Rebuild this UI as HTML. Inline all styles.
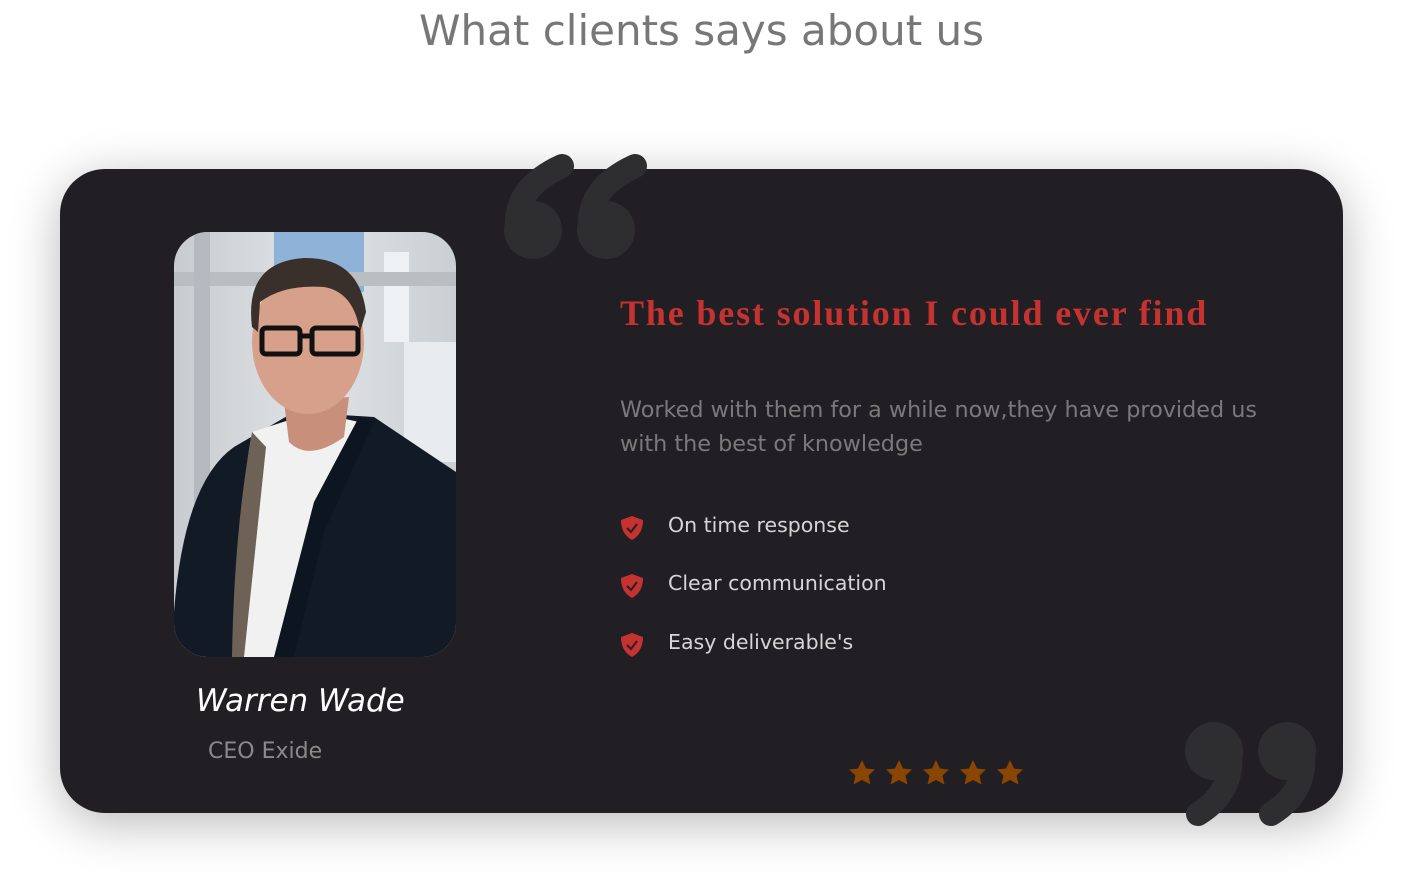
<!DOCTYPE html>
<html><head><meta charset="utf-8"><style>
html,body{margin:0;padding:0;background:#fff;width:1403px;height:877px;overflow:hidden;font-family:"Liberation Sans","DejaVu Sans",sans-serif}
h1{position:absolute;top:6px;left:0;width:1403px;text-align:center;margin:0;font-weight:400;font-size:42px;color:#777;font-family:"DejaVu Sans","Liberation Sans",sans-serif}
.card{position:absolute;left:60px;top:169px;width:1283px;height:644px;background:#211f23;border-radius:45px;box-shadow:0 10px 50px rgba(0,0,0,.28)}
.photo{position:absolute;left:174px;top:232px;width:282px;height:425px;border-radius:34px;overflow:hidden}
.name{position:absolute;left:196px;top:683px;font-size:31px;font-style:italic;color:#fff;font-family:"DejaVu Sans","Liberation Sans",sans-serif}
.role{position:absolute;left:208px;top:739px;font-size:22px;color:#8a8a8a;font-family:"DejaVu Sans",sans-serif}
.head{position:absolute;left:620px;top:292px;font-family:"Liberation Serif",serif;font-weight:bold;font-size:36px;color:#c43330;letter-spacing:1.85px;white-space:nowrap}
.body{position:absolute;left:620px;top:393px;font-size:22.3px;line-height:34px;color:#7a7a7a;width:680px;font-family:"DejaVu Sans",sans-serif}
.li{position:absolute;left:620px;font-size:20.5px;color:#d6d6d6;font-family:"DejaVu Sans",sans-serif}
.li svg{position:absolute;left:0;top:2px}
.li span{position:absolute;left:48px;top:0;white-space:nowrap}
</style></head><body>
<h1>What clients says about us</h1>
<div class="card"></div>
<svg style="position:absolute;left:0;top:0" width="1403" height="877">
<g fill="#2e2e31" stroke="#2e2e31">
<circle cx="533" cy="230" r="29" stroke="none"/>
<path d="M517 228 Q514 188 562 166" fill="none" stroke-width="24" stroke-linecap="round"/>
<circle cx="606" cy="230" r="29" stroke="none"/>
<path d="M590 228 Q587 188 635 166" fill="none" stroke-width="24" stroke-linecap="round"/>
<circle cx="1214" cy="751" r="29" stroke="none"/>
<path d="M1230 752 Q1234 792 1198 814" fill="none" stroke-width="24" stroke-linecap="round"/>
<circle cx="1287" cy="751" r="29" stroke="none"/>
<path d="M1303 752 Q1307 792 1271 814" fill="none" stroke-width="24" stroke-linecap="round"/>
</g>
<g fill="#8a4600">
<path id="st" d="M862 760 L866 768.5 L875 769.5 L868.5 775.5 L870.5 784.5 L862 780 L853.5 784.5 L855.5 775.5 L849 769.5 L858 768.5Z"/>
<use href="#st" x="37"/><use href="#st" x="74"/><use href="#st" x="111"/><use href="#st" x="148"/>
</g>
</svg>
<div class="photo"><svg width="282" height="425" viewBox="0 0 282 425">
<defs><linearGradient id="bg" x1="0" x2="1"><stop offset="0" stop-color="#c8ccd0"/><stop offset=".5" stop-color="#dfe3e6"/><stop offset="1" stop-color="#c9cfd3"/></linearGradient></defs>
<rect width="282" height="425" fill="url(#bg)"/>
<rect x="100" y="0" width="90" height="60" fill="#8fb2d8"/>
<rect x="210" y="20" width="25" height="90" fill="#eef1f3"/>
<rect x="0" y="40" width="282" height="14" fill="#b9bec3"/>
<rect x="20" y="0" width="16" height="425" fill="#b4babf"/>
<rect x="230" y="110" width="52" height="120" fill="#e9ecef"/>
<path d="M0 425 L0 380 Q10 250 60 215 L120 180 L200 185 L282 240 L282 425Z" fill="#121a26"/>
<path d="M78 200 L140 180 L185 190 L150 270 L105 425 L70 425 Q60 300 78 200Z" fill="#f1f1f1"/>
<path d="M78 200 L92 215 L70 425 L58 425 Q60 300 78 200Z" fill="#6d6255"/>
<path d="M185 185 L200 190 L150 300 L120 425 L100 425 L140 270Z" fill="#0d1520"/>
<path d="M110 170 L115 210 Q135 230 170 205 L175 165Z" fill="#c8907a"/>
<ellipse cx="134" cy="110" rx="56" ry="72" fill="#d6a08a"/>
<path d="M78 95 Q70 30 130 26 Q185 25 192 80 L186 100 Q180 60 150 55 Q110 52 86 70 L84 100Z" fill="#3a302b"/>
<g fill="none" stroke="#111" stroke-width="5"><rect x="88" y="96" width="38" height="26" rx="4"/><rect x="138" y="96" width="46" height="26" rx="4"/><path d="M126 104 L138 104"/></g>
</svg></div>
<div class="name">Warren Wade</div>
<div class="role">CEO Exide</div>
<div class="head">The best solution I could ever find</div>
<div class="body">Worked with them for a while now,they have provided us with the best of knowledge</div>
<div class="li" style="top:513px"><svg width="24" height="26" viewBox="0 0 24 26"><path d="M12 1 L23 5 Q23 19 12 25 Q1 19 1 5Z" fill="#c43330"/><path d="M7 13 L11 17 L17 9" fill="none" stroke="#2a1f22" stroke-width="2"/></svg><span>On time response</span></div>
<div class="li" style="top:571px"><svg width="24" height="26" viewBox="0 0 24 26"><path d="M12 1 L23 5 Q23 19 12 25 Q1 19 1 5Z" fill="#c43330"/><path d="M7 13 L11 17 L17 9" fill="none" stroke="#2a1f22" stroke-width="2"/></svg><span>Clear communication</span></div>
<div class="li" style="top:630px"><svg width="24" height="26" viewBox="0 0 24 26"><path d="M12 1 L23 5 Q23 19 12 25 Q1 19 1 5Z" fill="#c43330"/><path d="M7 13 L11 17 L17 9" fill="none" stroke="#2a1f22" stroke-width="2"/></svg><span>Easy deliverable's</span></div>
</body></html>
